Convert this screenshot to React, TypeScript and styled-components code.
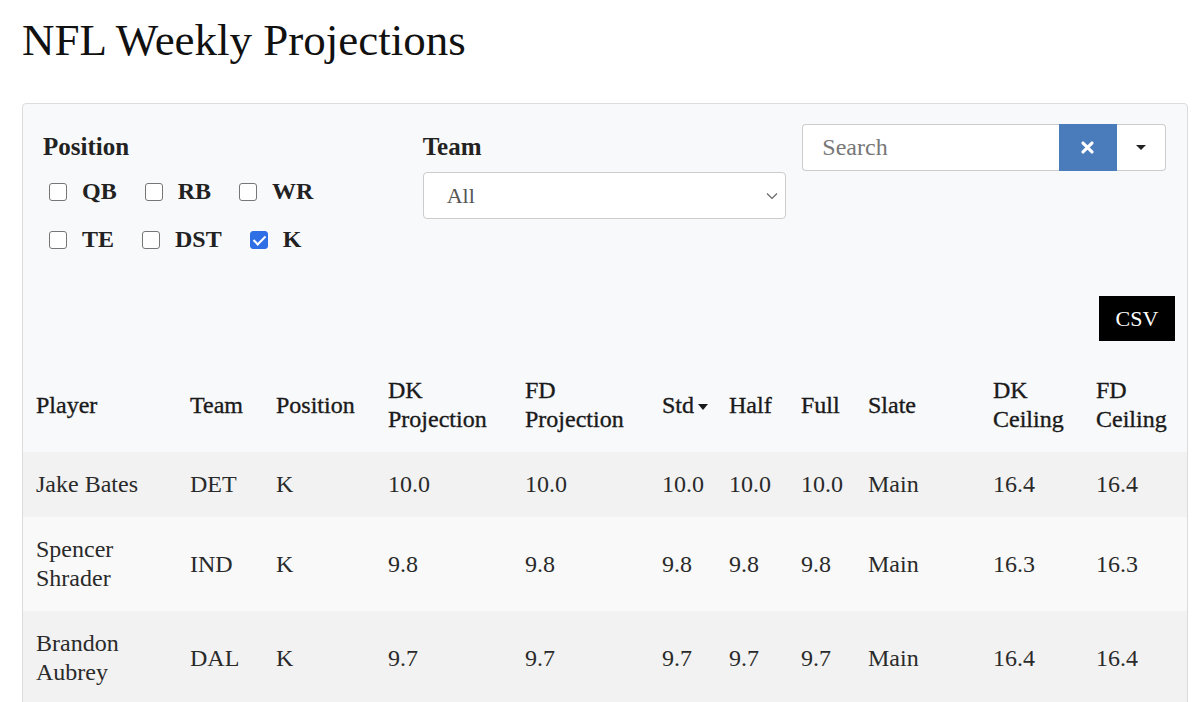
import React from "react";
import styled, { createGlobalStyle } from "styled-components";

const GlobalStyle = createGlobalStyle`
  html, body { margin: 0; padding: 0; background: #ffffff; }
  body { font-family: "Liberation Serif", "Times New Roman", serif; color: #222; }
  * { box-sizing: border-box; }
`;

const Page = styled.div`
  padding: 13px 12px 0 22px;
`;

const Title = styled.h1`
  margin: 0 0 36px;
  font-family: "Liberation Serif", serif;
  font-weight: 400;
  font-size: 45px;
  line-height: 54px;
  color: #111;
`;

const Panel = styled.section`
  background: #f8f9fa;
  border: 1px solid #dcdcdc;
  border-radius: 4px;
`;

const Filters = styled.div`
  display: grid;
  grid-template-columns: repeat(3, minmax(0, 1fr));
  column-gap: 16px;
  padding: 20px 21px 0 20px;
  align-items: start;
`;

const FilterGroup = styled.div`
  padding-top: 8px;
`;

const GroupLabel = styled.div`
  font-weight: 700;
  font-size: 25px;
  line-height: 29px;
  color: #222;
`;

const CheckList = styled.div`
  display: flex;
  flex-direction: column;
  gap: 19px;
  margin-top: 16px;
`;

const CheckRow = styled.div`
  display: flex;
  gap: 28px;
  padding-left: 6px;
`;

const CheckItem = styled.label`
  display: inline-flex;
  align-items: center;
  gap: 15px;
  font-weight: 700;
  font-size: 24px;
  line-height: 29px;
  color: #222;
`;

const Checkbox = styled.input`
  appearance: none;
  -webkit-appearance: none;
  position: relative;
  width: 18px;
  height: 18px;
  margin: 0;
  border: 1px solid #767676;
  border-radius: 3px;
  background: #fff;
  flex: none;
  &:checked {
    background: #2f6fe6;
    border-color: #2f6fe6;
  }
  &:checked::after {
    content: "";
    position: absolute;
    left: 5px;
    top: 1.5px;
    width: 5px;
    height: 10px;
    border: solid #fff;
    border-width: 0 2.5px 2.5px 0;
    transform: rotate(45deg);
  }
`;

const SelectBox = styled.div`
  margin-top: 11px;
  height: 47px;
  border: 1px solid #cccccc;
  border-radius: 4px;
  background: #fff;
  display: flex;
  align-items: center;
  justify-content: space-between;
  padding: 0 7px 0 23px;
  font-size: 22px;
  color: #555;
`;

const SearchGroup = styled.div`
  display: flex;
  height: 47px;
`;

const SearchInput = styled.input`
  flex: 1;
  min-width: 0;
  height: 100%;
  border: 1px solid #cccccc;
  border-right: none;
  border-radius: 4px 0 0 4px;
  padding: 0 10px 0 19px;
  font-family: "Liberation Serif", serif;
  font-size: 24px;
  color: #333;
  background: #fff;
  outline: none;
  &::placeholder { color: #777; }
`;

const ClearButton = styled.button`
  width: 58px;
  flex: none;
  height: 100%;
  border: none;
  background: #4a7bba;
  display: flex;
  align-items: center;
  justify-content: center;
  padding: 0;
`;

const CaretButton = styled.button`
  width: 49px;
  flex: none;
  height: 100%;
  border: 1px solid #cccccc;
  border-left: none;
  border-radius: 0 4px 4px 0;
  background: #fff;
  display: flex;
  align-items: center;
  justify-content: center;
  padding: 0;
`;

const Toolbar = styled.div`
  display: flex;
  justify-content: flex-end;
  padding-right: 12px;
  margin-top: 42px;
`;

const CsvButton = styled.button`
  width: 76px;
  height: 45px;
  border: none;
  border-radius: 0;
  background: #000;
  color: #fff;
  font-family: "Liberation Serif", serif;
  font-size: 22px;
  padding: 0;
`;

const Table = styled.table`
  margin-top: 17px;
  width: 100%;
  border-collapse: collapse;
  table-layout: fixed;
`;

const HeadCell = styled.th`
  padding: 18px 8px 18px 13px;
  text-align: left;
  vertical-align: middle;
  font-weight: 400;
  font-size: 24px;
  line-height: 29px;
  color: #1a1a1a;
  -webkit-text-stroke: 0.35px #1a1a1a;
  white-space: normal;
`;

const Row = styled.tr<{ $striped: boolean }>`
  background: ${(p) => (p.$striped ? "#f2f2f2" : "#f9f9f9")};
`;

const Cell = styled.td`
  padding: 18px 8px 18px 13px;
  text-align: left;
  vertical-align: middle;
  font-size: 24px;
  line-height: 29px;
  color: #2a2a2a;
`;

const SortCaret = styled.svg`
  margin-left: 4px;
  vertical-align: middle;
`;

const columns = [
  { label: "Player", width: 154 },
  { label: "Team", width: 86 },
  { label: "Position", width: 112 },
  { label: "DK Projection", width: 137 },
  { label: "FD Projection", width: 137 },
  { label: "Std", width: 67, sorted: true },
  { label: "Half", width: 72 },
  { label: "Full", width: 67 },
  { label: "Slate", width: 125 },
  { label: "DK Ceiling", width: 103 },
  { label: "FD Ceiling", width: 104 },
];

const rows = [
  ["Jake Bates", "DET", "K", "10.0", "10.0", "10.0", "10.0", "10.0", "Main", "16.4", "16.4"],
  ["Spencer Shrader", "IND", "K", "9.8", "9.8", "9.8", "9.8", "9.8", "Main", "16.3", "16.3"],
  ["Brandon Aubrey", "DAL", "K", "9.7", "9.7", "9.7", "9.7", "9.7", "Main", "16.4", "16.4"],
];

const positionRows = [
  [
    { name: "QB", checked: false },
    { name: "RB", checked: false },
    { name: "WR", checked: false },
  ],
  [
    { name: "TE", checked: false },
    { name: "DST", checked: false },
    { name: "K", checked: true },
  ],
];

export default function App() {
  return (
    <Page>
      <GlobalStyle />
      <Title>NFL Weekly Projections</Title>
      <Panel>
        <Filters>
          <FilterGroup>
            <GroupLabel>Position</GroupLabel>
            <CheckList>
              {positionRows.map((r, i) => (
                <CheckRow key={i}>
                  {r.map((p) => (
                    <CheckItem key={p.name}>
                      <Checkbox type="checkbox" defaultChecked={p.checked} />
                      {p.name}
                    </CheckItem>
                  ))}
                </CheckRow>
              ))}
            </CheckList>
          </FilterGroup>
          <FilterGroup>
            <GroupLabel>Team</GroupLabel>
            <SelectBox role="combobox">
              <span>All</span>
              <svg width="12" height="8" viewBox="0 0 12 8">
                <path d="M1 1.5 L6 6.5 L11 1.5" fill="none" stroke="#666" strokeWidth="1.2" />
              </svg>
            </SelectBox>
          </FilterGroup>
          <SearchGroup>
            <SearchInput placeholder="Search" />
            <ClearButton aria-label="Clear">
              <svg width="13" height="13" viewBox="0 0 14 14">
                <path d="M2.2 2.2 L11.8 11.8 M11.8 2.2 L2.2 11.8" stroke="#fff" strokeWidth="3.4" strokeLinecap="round" />
              </svg>
            </ClearButton>
            <CaretButton aria-label="Options">
              <svg width="10" height="5" viewBox="0 0 10 5">
                <path d="M0 0 L10 0 L5 5 Z" fill="#222" />
              </svg>
            </CaretButton>
          </SearchGroup>
        </Filters>
        <Toolbar>
          <CsvButton>CSV</CsvButton>
        </Toolbar>
        <Table>
          <colgroup>
            {columns.map((c) => (
              <col key={c.label} style={{ width: c.width }} />
            ))}
          </colgroup>
          <thead>
            <tr>
              {columns.map((c) => (
                <HeadCell key={c.label}>
                  {c.label}
                  {c.sorted && (
                    <SortCaret width="10" height="6" viewBox="0 0 10 6">
                      <path d="M0 0 L10 0 L5 6 Z" fill="#1a1a1a" />
                    </SortCaret>
                  )}
                </HeadCell>
              ))}
            </tr>
          </thead>
          <tbody>
            {rows.map((r, i) => (
              <Row key={i} $striped={i % 2 === 0}>
                {r.map((v, j) => (
                  <Cell key={j}>{v}</Cell>
                ))}
              </Row>
            ))}
          </tbody>
        </Table>
      </Panel>
    </Page>
  );
}
